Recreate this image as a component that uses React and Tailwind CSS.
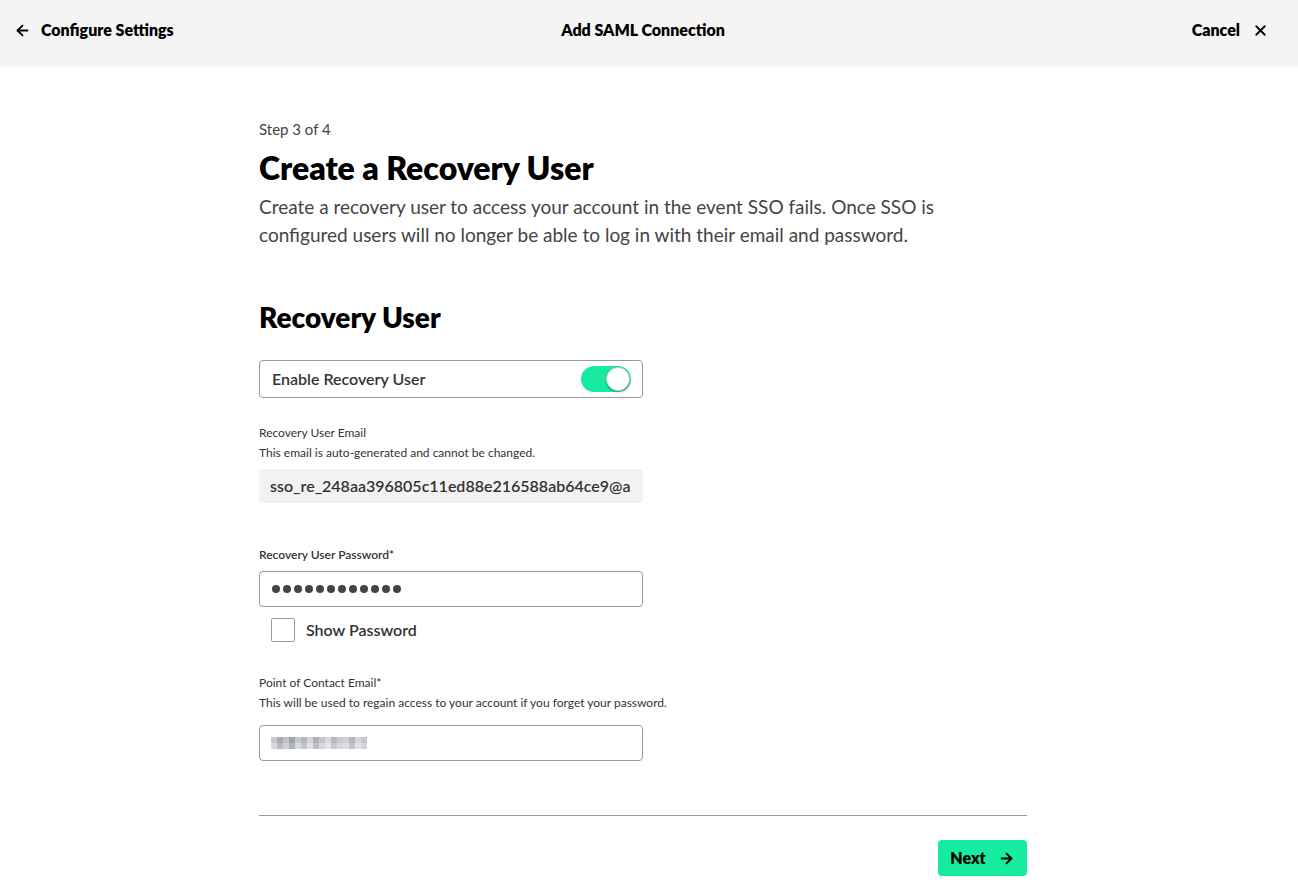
import React from 'react';
import { ArrowLeft, ArrowRight, X } from 'lucide-react';

const blurTop = [
  '#c9cbcf', '#a9acb1', '#bfc2c6', '#9fa3a8', '#c6c9cd', '#b4b7bc', '#d2d4d7', '#aeb1b6',
  '#c3c6ca', '#d7d9dc', '#b6b9be', '#c8cbcf', '#cdd0d3', '#b3b6bb', '#d4d6d9', '#c4c7cb',
];
const blurBottom = [
  '#d6d8db', '#b8bbc0', '#cfd1d5', '#b0b3b8', '#d9dbde', '#c1c4c8', '#dfe1e3', '#bcbfc3',
  '#d3d5d8', '#e3e5e7', '#c7cacd', '#d5d7da', '#dcdee0', '#c4c6ca', '#e0e2e4', '#d1d3d6',
];

const App = () => {
  return (
    <div className="min-h-screen bg-white text-[#333]" style={{ fontFamily: 'Lato, "Open Sans", sans-serif' }}>
      {/* Top bar */}
      <header className="h-[67px] bg-[#f4f4f4] flex items-start justify-between px-[14px] pt-[20px] relative">
        <button className="flex items-center gap-[10px] text-black font-extrabold text-[16px] leading-[20px]">
          <ArrowLeft size={17} strokeWidth={2.5} />
          <span>Configure Settings</span>
        </button>
        <h2 className="font-extrabold text-[16px] leading-[20px] text-black absolute left-[calc(50%-6px)] -translate-x-1/2 top-[20px]">Add SAML Connection</h2>
        <button className="flex items-center gap-[12px] text-black font-extrabold text-[16px] leading-[20px] pr-[15px]">
          <span>Cancel</span>
          <X size={17} strokeWidth={2.5} />
        </button>
      </header>

      <main className="w-[768px] ml-[259px] pt-[52px]">
        <p className="text-[15px] text-[#444] leading-[20px]">Step 3 of 4</p>
        <h1 className="mt-[9px] text-[32px] font-extrabold text-black leading-[40px]">Create a Recovery User</h1>
        <p className="mt-[5px] text-[19px] leading-[28px] text-[#444] w-[700px]">
          Create a recovery user to access your account in the event SSO fails. Once SSO is configured users will no longer be able to log in with their email and password.
        </p>

        <h2 className="mt-[51px] text-[28px] font-extrabold text-black leading-[34px]">Recovery User</h2>

        <div className="w-[384px]">
          <div className="mt-[26px] h-[38px] border border-[#999] rounded-[4px] flex items-center justify-between pl-[12px] pr-[11px]">
            <span className="text-[16px] font-semibold text-[#333]">Enable Recovery User</span>
            <div className="w-[50px] h-[26px] rounded-full bg-[#17eba0] relative">
              <div className="absolute right-[1px] top-[1px] w-[24px] h-[24px] rounded-full bg-white shadow-[0_1px_2px_rgba(0,0,0,0.35)] border border-[#ccc]"></div>
            </div>
          </div>

          <div className="mt-[25px]">
            <p className="text-[12px] leading-[20px] text-[#333]">Recovery User Email</p>
            <p className="text-[12px] leading-[20px] text-[#333] whitespace-nowrap">This email is auto-generated and cannot be changed.</p>
            <div className="mt-[6px] h-[34px] bg-[#f2f2f2] rounded-[4px] flex items-center px-[11px] overflow-hidden">
              <span className="text-[16px] font-semibold text-[#333] whitespace-nowrap">sso_re_248aa396805c11ed88e216588ab64ce9@a</span>
            </div>
          </div>

          <div className="mt-[42px]">
            <p className="text-[12px] leading-[20px] font-semibold text-[#333]">Recovery User Password*</p>
            <div className="mt-[6px] h-[36px] border border-[#999] rounded-[4px] flex items-center px-[12px] gap-[3px]">
              {Array.from({ length: 12 }).map((_, i) => (
                <span key={i} className="w-[8px] h-[8px] rounded-full bg-[#444]"></span>
              ))}
            </div>
            <label className="mt-[11px] flex items-center gap-[11px] pl-[12px]">
              <span className="w-[24px] h-[24px] border border-[#999] rounded-[2px] bg-white"></span>
              <span className="text-[16px] font-semibold text-[#333]">Show Password</span>
            </label>
          </div>

          <div className="mt-[31px]">
            <p className="text-[12px] leading-[20px] text-[#333]">Point of Contact Email*</p>
            <p className="text-[12px] leading-[20px] text-[#333] whitespace-nowrap">This will be used to regain access to your account if you forget your password.</p>
            <div className="mt-[12px] h-[36px] border border-[#999] rounded-[4px] flex items-center px-[11px]">
              <div className="flex flex-col">
                <div className="flex">
                  {blurTop.map((c, i) => (
                    <span key={i} className="w-[6px] h-[6px]" style={{ backgroundColor: c }}></span>
                  ))}
                </div>
                <div className="flex">
                  {blurBottom.map((c, i) => (
                    <span key={i} className="w-[6px] h-[6px]" style={{ backgroundColor: c }}></span>
                  ))}
                </div>
              </div>
            </div>
          </div>
        </div>

        <div className="mt-[54px] border-t border-[#999]"></div>
        <div className="flex justify-end mt-[24px]">
          <button className="h-[36px] w-[89px] bg-[#17eba0] rounded-[4px] flex items-center justify-center gap-[12px] font-extrabold text-[16px] text-black">
            <span>Next</span>
            <ArrowRight size={17} strokeWidth={2.5} />
          </button>
        </div>
      </main>
    </div>
  );
};

export default App;
